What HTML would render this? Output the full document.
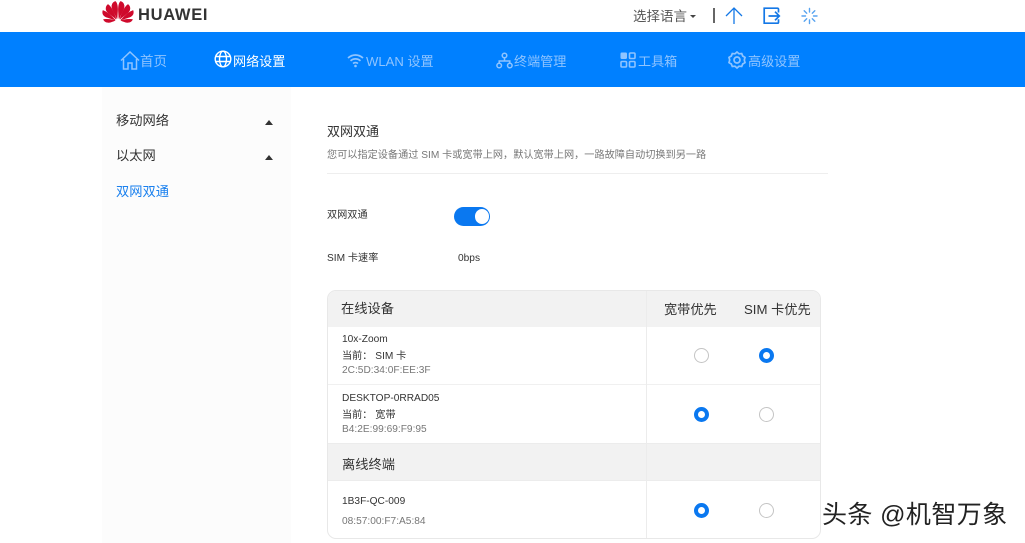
<!DOCTYPE html>
<html lang="zh"><head><meta charset="utf-8"><title>双网双通</title>
<style>
html,body{margin:0;padding:0;background:#fff}
#p{position:relative;width:1025px;height:543px;overflow:hidden;background:#fff;font-family:"Liberation Sans","Noto Sans CJK SC",sans-serif;color:#333}
#p div,#p svg{position:absolute}
.t{white-space:nowrap;line-height:20px;height:20px;margin-top:1px}
.n{font-size:13.100px;color:#8fc4ff;line-height:20px;white-space:nowrap;margin-top:1px}
.s{font-size:13.250px;color:#333}
.d{font-size:10.160px;color:#333}
.g{font-size:10.160px;color:#777}
.h{font-size:13.250px;color:#333}
.r{width:13px;height:13px;border-radius:50%;border:1px solid #c4c4c4;background:#fff}
.c{width:7px;height:7px;border-radius:50%;border:4px solid #0a78f0;background:#fff}
.ar{width:0;height:0;border-left:4.500px solid transparent;border-right:4.500px solid transparent;border-bottom:5px solid #333}
</style></head><body><div id="p">
<svg style="left:102px;top:1px" width="32" height="23" viewBox="0 0 32 23" fill="#cf0a2c" stroke="#cf0a2c" stroke-width=".6" stroke-linejoin="round">
<path d="M13.500 0.500C11 1 9.500 3.500 10 6.500C10.500 9 13.500 14 15 17.500C15.500 11 16.500 4 13.500 0.500Z"/>
<path d="M18.500 0.500C21 1 22.500 3.500 22 6.500C21.500 9 18.500 14 17 17.500C16.500 11 15.500 4 18.500 0.500Z"/>
<path d="M6 3.500C3.500 5.500 3.500 9 5.500 11C8 13.500 11.500 15.500 14 18C12.500 13 10 6.500 6 3.500Z"/>
<path d="M26 3.500C28.500 5.500 28.500 9 26.500 11C24 13.500 20.500 15.500 18 18C19.500 13 22 6.500 26 3.500Z"/>
<path d="M1 9.500C0 12.500 1.500 15 4 16C7 17 10.500 18 13 19C10 15.500 5.500 11 1 9.500Z"/>
<path d="M31 9.500C32 12.500 30.500 15 28 16C25 17 21.500 18 19 19C22 15.500 26.500 11 31 9.500Z"/>
<path d="M1.500 18.500C3 21.500 6.500 22 9 21C10.500 20.500 12 20 13 19.500C9.500 18.500 5 18 1.500 18.500Z"/>
<path d="M30.500 18.500C29 21.500 25.500 22 23 21C21.500 20.500 20 20 19 19.500C22.500 18.500 27 18 30.500 18.500Z"/>
</svg>
<div class="t" style="left:138px;top:4px;font-size:16.500px;font-weight:bold;color:#333;letter-spacing:.7px">HUAWEI</div>
<div class="t" style="left:633px;top:6px;font-size:13.500px;color:#555">选择语言</div>
<div class="ar" style="left:690px;top:15px;border-left-width:3px;border-right-width:3px;border-bottom:0;border-top:3px solid #444"></div>
<div style="left:713px;top:8px;width:2px;height:15px;background:#666"></div>
<svg style="left:724px;top:6px" width="20" height="20" viewBox="0 0 20 20" fill="none" stroke="#1478e6" stroke-width="1.300"><path d="M10 18V2.500M2 10l8-8 8 8"/></svg>
<svg style="left:762px;top:7px" width="20" height="18" viewBox="0 0 20 18" fill="none" stroke="#1478e6" stroke-width="1.700"><path d="M16.500 5.500V2.200a1 1 0 0 0-1-1H2.200v15h13.300a1 1 0 0 0 1-1v-3"/><path d="M6.500 9h11M13 4.700L17.300 9 13 13.300"/></svg>
<svg style="left:800px;top:6px" width="19" height="20" viewBox="0 0 19 20" fill="none" stroke="#58a4f0" stroke-width="1.400" stroke-linecap="round"><path d="M9.500 2.500V6M9.500 14v3.500M2 10h3.500M13.500 10H17M4.200 4.700l2.500 2.500M12.300 12.800l2.500 2.500M14.800 4.700l-2.500 2.500M6.700 12.800l-2.500 2.500"/></svg>

<div style="left:0;top:32px;width:1025px;height:55px;background:#0080ff"></div>
<svg style="left:120px;top:51px" width="20" height="19" viewBox="0 0 20 19" fill="none" stroke="#8fc4ff" stroke-width="1.500"><path d="M1 9.500L10 1l9 8.500M3.500 8v10h4.500v-6h4v6h4.500V8"/></svg>
<div class="n" style="left:140px;top:51px;font-size:13.500px">首页</div>
<svg style="left:214px;top:50px" width="18" height="18" viewBox="0 0 18 18" fill="none" stroke="#fff" stroke-width="1.400"><circle cx="9" cy="9" r="7.800"/><ellipse cx="9" cy="9" rx="3.500" ry="7.800"/><path d="M1.500 6.500h15M1.500 11.500h15"/></svg>
<div class="n" style="left:233px;top:51px;color:#fff">网络设置</div>
<svg style="left:347px;top:53px" width="17" height="15" viewBox="0 0 17 15" fill="none" stroke="#8fc4ff" stroke-width="1.700"><path d="M1 5C5.500 1 11.500 1 16 5M3.500 7.800C6.500 5.200 10.500 5.200 13.500 7.800M6 10.500c1.500-1.200 3.500-1.200 5 0"/><circle cx="8.500" cy="13" r="1.300" fill="#8fc4ff" stroke="none"/></svg>
<div class="n" style="left:366px;top:51px">WLAN 设置</div>
<svg style="left:496px;top:52px" width="17" height="17" viewBox="0 0 17 17" fill="none" stroke="#8fc4ff" stroke-width="1.500"><circle cx="8.500" cy="3.500" r="2.300"/><circle cx="3.200" cy="13.500" r="2.300"/><circle cx="13.800" cy="13.500" r="2.300"/><path d="M8.500 6v3M3.200 11.200V9h10.600v2.200"/></svg>
<div class="n" style="left:514px;top:51px">终端管理</div>
<svg style="left:620px;top:52px" width="16" height="16" viewBox="0 0 16 16"><rect x=".5" y=".5" width="6.500" height="6.500" rx="1.200" fill="#8fc4ff"/><g fill="none" stroke="#8fc4ff" stroke-width="1.600"><rect x="9.500" y="1" width="5.500" height="5.500" rx="1"/><rect x="1" y="9.500" width="5.500" height="5.500" rx="1"/><rect x="9.500" y="9.500" width="5.500" height="5.500" rx="1"/></g></svg>
<div class="n" style="left:638px;top:51px">工具箱</div>
<svg style="left:728px;top:51px" width="18" height="18" viewBox="0 0 18 18" fill="none" stroke="#8fc4ff" stroke-width="1.700"><path d="M9 1l2 1.800 2.700-.3 1 2.500 2.300 1.400-.7 2.600.7 2.600-2.300 1.400-1 2.500-2.700-.3L9 17l-2-1.800-2.700.3-1-2.500L1 11.600 1.700 9 1 6.400 3.300 5l1-2.500 2.700.3z"/><circle cx="9" cy="9" r="3"/></svg>
<div class="n" style="left:748px;top:51px">高级设置</div>

<div style="left:102px;top:87px;width:189px;height:456px;background:#fcfcfc"></div>
<div class="t s" style="left:116px;top:110px">移动网络</div>
<div class="ar" style="left:265px;top:120px"></div>
<div class="t s" style="left:116px;top:145px">以太网</div>
<div class="ar" style="left:265px;top:155px"></div>
<div class="t s" style="left:116px;top:181px;color:#1a80ee">双网双通</div>

<div class="t" style="left:327px;top:121px;font-size:13px;color:#333">双网双通</div>
<div class="t" style="left:327px;top:145px;font-size:10.160px;color:#777">您可以指定设备通过 SIM 卡或宽带上网，默认宽带上网，一路故障自动切换到另一路</div>
<div style="left:327px;top:173px;width:501px;height:1px;background:#eee"></div>
<div class="t d" style="left:327px;top:205px">双网双通</div>
<div style="left:454px;top:207px;width:36px;height:19px;border-radius:10px;background:#0a78f0"></div>
<div style="left:475px;top:209px;width:14px;height:14.500px;border-radius:50%;background:#fff"></div>
<div class="t d" style="left:327px;top:248px">SIM 卡速率</div>
<div class="t d" style="left:458px;top:248px">0bps</div>

<div style="left:327px;top:290px;width:492px;height:247px;border:1px solid #e8e8e8;border-radius:9px;overflow:hidden;background:#fff">
<div style="left:0;top:0;width:492px;height:36px;background:#f2f2f2"></div>
<div style="left:0;top:93px;width:492px;height:1px;background:#f0f0f0"></div>
<div style="left:0;top:152px;width:492px;height:38px;background:#f2f2f2;border-top:1px solid #ececec;border-bottom:1px solid #ececec;box-sizing:border-box"></div>
<div style="left:318px;top:0;width:1px;height:248px;background:#ececec"></div>
</div>
<div class="t h" style="left:341px;top:298px">在线设备</div>
<div class="t" style="left:664px;top:299px;font-size:13.200px">宽带优先</div>
<div class="t" style="left:744px;top:299px;font-size:13.200px">SIM 卡优先</div>
<div class="t d" style="left:342px;top:329px">10x-Zoom</div>
<div class="t d" style="left:342px;top:346px">当前： SIM 卡</div>
<div class="t g" style="left:342px;top:360px">2C:5D:34:0F:EE:3F</div>
<div class="t d" style="left:342px;top:388px">DESKTOP-0RRAD05</div>
<div class="t d" style="left:342px;top:405px">当前： 宽带</div>
<div class="t g" style="left:342px;top:419px">B4:2E:99:69:F9:95</div>
<div class="t h" style="left:342px;top:454px">离线终端</div>
<div class="t d" style="left:342px;top:491px">1B3F-QC-009</div>
<div class="t g" style="left:342px;top:511px">08:57:00:F7:A5:84</div>
<div class="r" style="left:693.500px;top:348px"></div>
<div class="c" style="left:759px;top:348px"></div>
<div class="c" style="left:693.500px;top:407px"></div>
<div class="r" style="left:759px;top:407px"></div>
<div class="c" style="left:693.500px;top:502.500px"></div>
<div class="r" style="left:759px;top:503px"></div>
<div class="t" style="left:822px;top:503px;height:22px;line-height:22px;font-size:25px;letter-spacing:.4px;color:#222;text-shadow:1px 1px 0 #fff,-1px -1px 0 #fff">头条 @机智万象</div>
</div></body></html>
